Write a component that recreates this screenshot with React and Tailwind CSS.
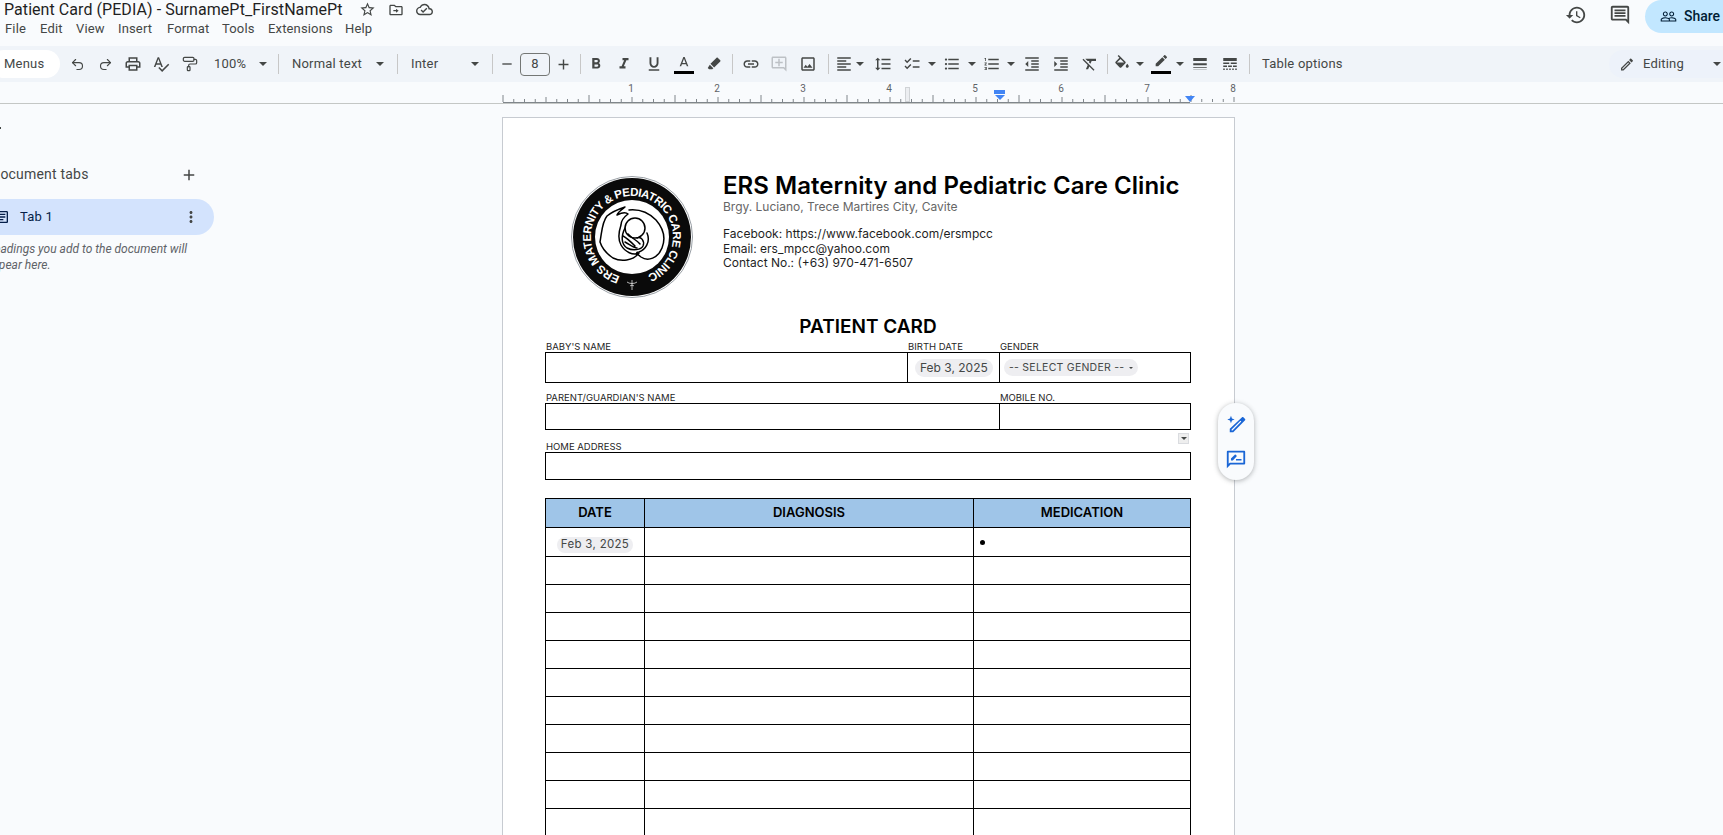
import React from "react";
import { Undo2, Redo2, PaintRoller } from "lucide-react";

const paths = {
  star: "M22 9.24l-7.19-.62L12 2 9.19 8.63 2 9.24l5.46 4.73L5.82 21 12 17.27 18.18 21l-1.63-7.03L22 9.24zM12 15.4l-3.76 2.27 1-4.28-3.32-2.88 4.38-.38L12 6.1l1.71 4.04 4.38.38-3.32 2.88 1 4.28L12 15.4z",
  move: "M20 6h-8l-2-2H4c-1.1 0-2 .9-2 2v12c0 1.1.9 2 2 2h16c1.1 0 2-.9 2-2V8c0-1.1-.9-2-2-2zm0 12H4V6h5.17l2 2H20v10zm-8-2l4-3-4-3v2H8v2h4v2z",
  cloud: "M19.35 10.04C18.67 6.59 15.64 4 12 4 9.11 4 6.6 5.64 5.35 8.04 2.34 8.36 0 10.91 0 14c0 3.31 2.69 6 6 6h13c2.76 0 5-2.24 5-5 0-2.64-2.05-4.78-4.65-4.96zM19 18H6c-2.21 0-4-1.79-4-4 0-2.05 1.53-3.76 3.56-3.97l1.07-.11.5-.95C8.08 7.14 9.94 6 12 6c2.62 0 4.88 1.86 5.39 4.43l.3 1.5 1.53.11c1.56.1 2.78 1.41 2.78 2.96 0 1.65-1.35 3-3 3zm-9-3.82l-2.09-2.09L6.5 13.5 10 17l6.01-6.01-1.41-1.41z",
  print: "M19 8h-1V3H6v5H5c-1.66 0-3 1.34-3 3v6h4v4h12v-4h4v-6c0-1.66-1.34-3-3-3zM8 5h8v3H8V5zm8 12v2H8v-4h8v2zm2-2v-2H6v2H4v-4c0-.55.45-1 1-1h14c.55 0 1 .45 1 1v4h-2z",
  spell: "M12.45 16h2.09L9.43 3H7.57L2.46 16h2.09l1.12-3h5.64l1.14 3zm-6.02-5L8.5 5.48 10.57 11H6.43zm15.16.59l-8.09 8.09L9.83 16l-1.41 1.41 5.09 5.09L23 13l-1.41-1.41z",
  bold: "M15.6 10.79c.97-.67 1.65-1.77 1.65-2.79 0-2.26-1.75-4-4-4H7v14h7.04c2.09 0 3.71-1.7 3.71-3.79 0-1.52-.86-2.82-2.15-3.42zM10 6.5h3c.83 0 1.5.67 1.5 1.5s-.67 1.5-1.5 1.5h-3v-3zm3.5 9H10v-3h3.5c.83 0 1.5.67 1.5 1.5s-.67 1.5-1.5 1.5z",
  italic: "M10 4v3h2.21l-3.42 8H6v3h8v-3h-2.21l3.42-8H18V4z",
  underline: "M12 17c3.31 0 6-2.69 6-6V3h-2.5v8c0 1.93-1.57 3.5-3.5 3.5S8.5 12.93 8.5 11V3H6v8c0 3.31 2.69 6 6 6zm-7 2v2h14v-2H5z",
  letterA: "M11 3L5.5 17h2.25l1.12-3h6.25l1.12 3h2.25L13 3h-2zm-1.38 9L12 5.67 14.38 12H9.62z",
  marker: "M17.6 2.6l3.8 3.8c.5.5.5 1.2 0 1.7l-9.2 9.2-5.5-5.5 9.2-9.2c.5-.5 1.2-.5 1.7 0zM5.7 13l5.3 5.3-1.6 1.6H4.6l-2-2L5.7 13z",
  link: "M3.9 12c0-1.71 1.39-3.1 3.1-3.1h4V7H7c-2.76 0-5 2.24-5 5s2.24 5 5 5h4v-1.9H7c-1.71 0-3.1-1.39-3.1-3.1zM8 13h8v-2H8v2zm9-6h-4v1.9h4c1.71 0 3.1 1.39 3.1 3.1s-1.39 3.1-3.1 3.1h-4V17h4c2.76 0 5-2.24 5-5s-2.24-5-5-5z",
  addComment: "M22 4c0-1.1-.9-2-2-2H4c-1.1 0-2 .9-2 2v12c0 1.1.9 2 2 2h14l4 4V4zm-2 13.17L18.83 16H4V4h16v13.17zM13 5h-2v4H7v2h4v4h2v-4h4V9h-4z",
  image: "M19 5v14H5V5h14m0-2H5c-1.1 0-2 .9-2 2v14c0 1.1.9 2 2 2h14c1.1 0 2-.9 2-2V5c0-1.1-.9-2-2-2zm-4.86 8.86l-3 3.87L9 13.14 6 17h12l-3.86-5.14z",
  align: "M15 15H3v2h12v-2zm0-8H3v2h12V7zM3 13h18v-2H3v2zm0 8h18v-2H3v2zM3 3v2h18V3H3z",
  spacing: "M6 7h2.5L5 3.5 1.5 7H4v10H1.5L5 20.5 8.5 17H6V7zm4-2v2h12V5H10zm0 14h12v-2H10v2zm0-6h12v-2H10v2z",
  checklist: "M22 7h-9v2h9V7zm0 8h-9v2h9v-2zM5.54 11L2 7.46l1.41-1.41 2.12 2.12 4.24-4.24 1.41 1.41L5.54 11zm0 8L2 15.46l1.41-1.41 2.12 2.12 4.24-4.24 1.41 1.41L5.54 19z",
  bullets: "M4 10.5c-.83 0-1.5.67-1.5 1.5s.67 1.5 1.5 1.5 1.5-.67 1.5-1.5-.67-1.5-1.5-1.5zm0-6c-.83 0-1.5.67-1.5 1.5S3.17 7.5 4 7.5 5.5 6.83 5.5 6 4.83 4.5 4 4.5zm0 12c-.83 0-1.5.68-1.5 1.5s.68 1.5 1.5 1.5 1.5-.68 1.5-1.5-.67-1.5-1.5-1.5zM7 19h14v-2H7v2zm0-6h14v-2H7v2zm0-8v2h14V5H7z",
  numbers: "M2 17h2v.5H3v1h1v.5H2v1h3v-4H2v1zm1-9h1V4H2v1h1v3zm-1 3h1.8L2 13.1v.9h3v-1H3.2L5 10.9V10H2v1zm5-6v2h14V5H7zm0 14h14v-2H7v2zm0-6h14v-2H7v2z",
  indentLess: "M11 17h10v-2H11v2zm-8-5l4 4V8l-4 4zm0 9h18v-2H3v2zM3 3v2h18V3H3zm8 6h10V7H11v2zm0 4h10v-2H11v2z",
  indentMore: "M3 21h18v-2H3v2zM3 8v8l4-4-4-4zm8 9h10v-2H11v2zM3 3v2h18V3H3zm8 6h10V7H11v2zm0 4h10v-2H11v2z",
  clear: "M3.27 5L2 6.27l6.97 6.97L6.5 19h3l1.57-3.66L16.73 21 18 19.73 3.55 5.27 3.27 5zM6 5v.18L8.82 8h2.4l-.72 1.68 2.1 2.1L14.21 8H20V5H6z",
  fill: "M16.56 8.94L7.62 0 6.21 1.41l2.38 2.38-5.15 5.15c-.59.59-.59 1.54 0 2.12l5.5 5.5c.29.29.68.44 1.06.44s.77-.15 1.06-.44l5.5-5.5c.59-.58.59-1.53 0-2.12zM5.21 10L10 5.21 14.79 10H5.21zM19 11.5s-2 2.17-2 3.5c0 1.1.9 2 2 2s2-.9 2-2c0-1.33-2-3.5-2-3.5z",
  pen: "M17.75 7L14 3.25l-10 10V17h3.75l10-10zm2.96-2.96c.39-.39.39-1.02 0-1.41L18.37.29c-.39-.39-1.02-.39-1.41 0L15 2.25 18.75 6l1.96-1.96z",
  weight: "M3 17h18v-1H3v1zm0 3h18v-.5H3v.5zm0-6.5h18V11H3v2.5zM3 4v4h18V4H3z",
  dash: "M3 16h5v-2H3v2zm6.5 0h5v-2h-5v2zm6.5 0h5v-2h-5v2zM3 20h2v-2H3v2zm4 0h2v-2H7v2zm4 0h2v-2h-2v2zm4 0h2v-2h-2v2zm4 0h2v-2h-2v2zM3 12h8v-2H3v2zm10 0h8v-2h-8v2zM3 4v4h18V4H3z",
  history: "M13 3c-4.97 0-9 4.03-9 9H1l3.89 3.89.07.14L9 12H6c0-3.87 3.13-7 7-7s7 3.13 7 7-3.13 7-7 7c-1.93 0-3.68-.79-4.94-2.06l-1.42 1.42C8.27 19.99 10.51 21 13 21c4.97 0 9-4.03 9-9s-4.03-9-9-9zm-1 5v5l4.28 2.54.72-1.21-3.5-2.08V8H12z",
  comment: "M21.99 4c0-1.1-.89-2-1.99-2H4c-1.1 0-2 .9-2 2v12c0 1.1.9 2 2 2h14l4 4-.01-18zM20 4v13.17L18.83 16H4V4h16zM6 12h12v2H6zm0-3h12v2H6zm0-3h12v2H6z",
  people: "M16.5 13c-1.2 0-3.07.34-4.5 1-1.43-.67-3.3-1-4.5-1C5.33 13 1 14.08 1 16.25V19h22v-2.75c0-2.17-4.33-3.25-6.5-3.25zm-4 4.5h-10v-1.25c0-.54 2.56-1.75 5-1.75s5 1.21 5 1.75v1.25zm9 0H14v-1.25c0-.46-.2-.86-.52-1.22.88-.3 1.96-.53 3.02-.53 2.44 0 5 1.21 5 1.75v1.25zM7.5 12c1.93 0 3.5-1.57 3.5-3.5S9.43 5 7.5 5 4 6.57 4 8.5 5.57 12 7.5 12zm0-5.5c1.1 0 2 .9 2 2s-.9 2-2 2-2-.9-2-2 .9-2 2-2zm9 5.5c1.93 0 3.5-1.57 3.5-3.5S18.43 5 16.5 5 13 6.57 13 8.5s1.57 3.5 3.5 3.5zm0-5.5c1.1 0 2 .9 2 2s-.9 2-2 2-2-.9-2-2 .9-2 2-2z",
  edit: "M3 17.25V21h3.75L17.81 9.94l-3.75-3.75L3 17.25zM5.92 19H5v-.92l9.06-9.06.92.92L5.92 19zM20.71 7.04c.39-.39.39-1.02 0-1.41l-2.34-2.34c-.39-.39-1.02-.39-1.41 0l-1.83 1.83 3.75 3.75 1.83-1.83z",
  plus: "M19 13h-6v6h-2v-6H5v-2h6V5h2v6h6v2z",
  minus: "M19 13H5v-2h14v2z",
  kebab: "M12 8c1.1 0 2-.9 2-2s-.9-2-2-2-2 .9-2 2 .9 2 2 2zm0 2c-1.1 0-2 .9-2 2s.9 2 2 2 2-.9 2-2-.9-2-2-2zm0 6c-1.1 0-2 .9-2 2s.9 2 2 2 2-.9 2-2-.9-2-2-2z",
  doc: "M19 5v14H5V5h14m0-2H5c-1.1 0-2 .9-2 2v14c0 1.1.9 2 2 2h14c1.1 0 2-.9 2-2V5c0-1.1-.9-2-2-2zM7 7h10v2H7zm0 4h10v2H7zm0 4h7v2H7z",
};

const Icon = ({ d, className = "w-[18px] h-[18px] text-[#444746]" }) => (
  <svg viewBox="0 0 24 24" fill="currentColor" className={className}>
    <path d={d} />
  </svg>
);

// toolbar button box, centered icon
const Btn = ({ d, className = "w-[28px]", iconClass }) => (
  <div className={`${className} flex items-center justify-center shrink-0`}>
    <Icon d={d} className={iconClass} />
  </div>
);

const Caret = ({ className = "w-[12px]" }) => (
  <div className={`${className} flex items-center justify-center shrink-0`}>
    <div className="w-0 h-0 border-l-[4px] border-r-[4px] border-t-[4px] border-l-transparent border-r-transparent border-t-[#444746]" />
  </div>
);

const Divider = ({ className }) => (
  <div className={`${className} w-px h-[20px] bg-[#c7c7c7] shrink-0`} />
);

const Toolbar = () => (
  <div className="h-[36px] bg-[#f0f4f9] flex items-center text-[13px] text-[#444746] font-['Roboto',sans-serif] tracking-[0.2px]">
    <div className="w-[70px] ml-[-10px] h-[28px] bg-white rounded-full flex items-center pl-[14px] shrink-0">Menus</div>
    <div className="w-[28px] ml-[3px] flex justify-center shrink-0"><Undo2 size={15} strokeWidth={1.8} /></div>
    <div className="w-[28px] flex justify-center shrink-0"><Redo2 size={15} strokeWidth={1.8} /></div>
    <Btn d={paths.print} />
    <Btn d={paths.spell} />
    <div className="w-[28px] ml-[1px] flex justify-center shrink-0"><PaintRoller size={16} strokeWidth={1.8} /></div>
    <div className="w-[42px] ml-[10px] shrink-0">100%</div>
    <Caret className="w-[14px]" />
    <Divider className="ml-[8px]" />
    <div className="w-[81px] ml-[13px] shrink-0">Normal text</div>
    <Caret className="w-[14px]" />
    <Divider className="ml-[10px]" />
    <div className="w-[57px] ml-[13px] shrink-0">Inter</div>
    <Caret className="w-[14px]" />
    <Divider className="ml-[10px]" />
    <Btn d={paths.minus} className="w-[27px]" iconClass="w-[16px] h-[16px] text-[#444746]" />
    <div className="w-[30px] h-[23px] border border-[#747775] rounded-[4px] flex items-center justify-center shrink-0">8</div>
    <Btn d={paths.plus} className="w-[26px]" iconClass="w-[17px] h-[17px] text-[#444746]" />
    <Divider className="ml-[4px]" />
    <Btn d={paths.bold} className="w-[28px] ml-[1px]" />
    <Btn d={paths.italic} />
    <Btn d={paths.underline} className="w-[28px] ml-[2px]" />
    <div className="w-[28px] ml-[2px] flex flex-col items-center shrink-0">
      <Icon d={paths.letterA} className="w-[18px] h-[16px] text-[#444746]" />
      <div className="w-[20px] h-[3px] bg-black" />
    </div>
    <Btn d={paths.marker} className="w-[28px] ml-[2px]" iconClass="w-[16px] h-[16px] text-[#444746]" />
    <Divider className="ml-[4px]" />
    <Btn d={paths.link} className="w-[28px] ml-[4px]" />
    <Btn d={paths.addComment} iconClass="w-[18px] h-[18px] text-[#bdc1c6]" />
    <Btn d={paths.image} className="w-[28px] ml-[1px]" />
    <Divider className="ml-[6px]" />
    <Btn d={paths.align} className="w-[24px] ml-[3px]" />
    <Caret className="w-[8px]" />
    <Btn d={paths.spacing} className="w-[28px] ml-[5px]" />
    <Btn d={paths.checklist} className="w-[28px] ml-[1px]" />
    <Caret />
    <Btn d={paths.bullets} />
    <Caret />
    <Btn d={paths.numbers} className="w-[26px] ml-[1px]" />
    <Caret />
    <Btn d={paths.indentLess} className="w-[28px] ml-[1px]" />
    <Btn d={paths.indentMore} className="w-[28px] ml-[1px]" />
    <Btn d={paths.clear} className="w-[28px] ml-[1px]" />
    <Divider className="ml-[3px]" />
    <Btn d={paths.fill} className="w-[25px] ml-[1px]" />
    <Caret />
    <div className="w-[27px] ml-[1px] flex flex-col items-center shrink-0">
      <Icon d={paths.pen} className="w-[18px] h-[16px] text-[#444746]" />
      <div className="w-[20px] h-[3px] bg-black" />
    </div>
    <Caret />
    <Btn d={paths.weight} />
    <Btn d={paths.dash} className="w-[28px] ml-[2px]" />
    <Divider className="ml-[5px]" />
    <div className="ml-[12px] shrink-0">Table options</div>
    <div className="ml-auto w-[114px] h-[28px] bg-[#edf2fa] rounded-l-full flex items-center pl-[10px] shrink-0">
      <Icon d={paths.edit} className="w-[17px] h-[17px] text-[#444746]" />
      <span className="ml-[8px]">Editing</span>
      <Caret className="w-[12px] ml-[27px]" />
    </div>
  </div>
);

const Ruler = () => {
  const ticks = Array.from({ length: 69 }, (_, i) => i);
  return (
    <div className="h-[22px] border-b border-[#c4c7c5] pl-[500px]">
      <svg width="745" height="21" className="block">
        <line x1="3" y1="20.5" x2="690" y2="20.5" stroke="#80868b" />
        {ticks.map((i) => {
          const x = 3 + i * 10.75;
          const h = i % 8 === 0 ? 7 : i % 4 === 0 ? 5 : 3;
          return <line key={i} x1={x} x2={x} y1={20 - h} y2={20} stroke="#80868b" />;
        })}
        {[1, 2, 3, 4, 5, 6, 7, 8].map((n) => (
          <text key={n} x={45 + n * 86} y="10" textAnchor="middle" fontSize="10" fill="#5f6368" fontFamily="Roboto, sans-serif">
            {n}
          </text>
        ))}
        <rect x="405.5" y="5.5" width="4" height="14" fill="#eceef1" stroke="#d0d3d6" />
        <rect x="494" y="8" width="11" height="4" fill="#4285f4" />
        <polygon points="495,13 505,13 500,18" fill="#4285f4" />
        <polygon points="685,14 695,14 690,20" fill="#4285f4" />
      </svg>
    </div>
  );
};

const Sidebar = () => (
  <aside className="w-[516px] ml-[-14px] shrink-0 font-['Roboto',sans-serif]">
    <div className="mt-[23px] ml-[13px] w-[2px] h-[1.5px] bg-[#444746]" />
    <div className="mt-[36px] h-[20px] w-[218px] pl-[5px] pr-[6px] flex items-center justify-between text-[14px] text-[#444746] tracking-[0.2px]">
      <span>Document tabs</span>
      <Icon d={paths.plus} className="w-[18px] h-[18px] text-[#444746]" />
    </div>
    <div className="mt-[14px] h-[36px] w-[228px] bg-[#d3e3fd] rounded-r-full flex items-center pl-[8px] pr-[14px] text-[13px] text-[#041e49]">
      <Icon d={paths.doc} className="w-[16px] h-[16px] text-[#041e49]" />
      <span className="ml-[10px] tracking-[0.2px]">Tab 1</span>
      <Icon d={paths.kebab} className="w-[18px] h-[18px] text-[#444746] ml-auto" />
    </div>
    <p className="mt-[6px] w-[210px] text-[12px] leading-[16px] italic text-[#5f6368]">
      Headings you add to the document will appear here.
    </p>
  </aside>
);

// badge logo of the clinic, drawn by hand
const Logo = () => (
  <svg width="122" height="122" viewBox="0 0 122 122" className="block">
    <circle cx="61" cy="61" r="60.5" fill="#fff" stroke="#9aa0a6" />
    <circle cx="61" cy="61" r="59" fill="#0a0a0a" />
    <circle cx="61" cy="61" r="37" fill="#fff" />
    <path id="logoArc" d="M49 100.2 A41 41 0 1 1 77 98.7" fill="none" />
    <text fontSize="11.5" fontWeight="800" fill="#fff" fontFamily="'Liberation Sans', sans-serif">
      <textPath href="#logoArc" textLength="229" lengthAdjust="spacing">
        ERS MATERNITY &amp; PEDIATRIC CARE CLINIC
      </textPath>
    </text>
    <g fill="none" stroke="#000" strokeWidth="1.5" strokeLinecap="round" strokeLinejoin="round">
      <path d="M29 66 C31 55 31 46 36 40 C42 35 48 33 54 31 C50 34 47 36 46 39 C50 37 55 36 57 38 C53 41 50 44 50 49 C48 55 46 62 50 69 C54 76 62 80 68 77 C62 85 50 86 42 82 C36 78 31 72 29 66 Z" />
      <path d="M58 34 C68 33 78 37 85 44 C92 52 95 62 91 72 C87 82 77 86 70 81 C66 78 64 76 68 76 C74 74 80 66 76 57" />
      <circle cx="64" cy="52" r="10" />
      <path d="M54 52 C50 60 50 68 56 72 C62 75 70 74 72 70 C74 65 70 60 66 62" />
      <path d="M52 60 C56 62 60 66 64 70 M57 58 C60 62 66 64 69 68 M54 66 C58 68 62 72 66 72" />
    </g>
    <g stroke="#fff" strokeWidth="0.7" fill="none">
      <path d="M61 104 V114 M56 106 C58 108 64 108 66 106 M59 110 C60 109 62 109 63 110" />
    </g>
  </svg>
);

const Label = ({ children, className = "" }) => (
  <div className={`h-[13px] text-[9.5px] leading-[15px] pl-px text-[#1f1f1f] ${className}`}>{children}</div>
);

const Chip = ({ children, className = "" }) => (
  <span className={`inline-flex items-center bg-[#eeeef1] rounded-full text-[#444746] ${className}`}>{children}</span>
);

const rows = Array.from({ length: 11 }, (_, i) => i);

const PatientPage = () => (
  <main className="w-[733px] h-[760px] mt-[13px] shrink-0 bg-white border border-[#c7cbd1] border-b-0 pl-[42px] pr-[43px] font-['Inter',sans-serif] text-black">
    <div className="flex pt-[52px] h-[195px]">
      <div className="w-[178px] shrink-0 pl-[26px] pt-[6px]">
        <Logo />
      </div>
      <div>
        <h1 className="pt-[1px] text-[24px] leading-[29px] font-semibold whitespace-nowrap tracking-[0.05px]">ERS Maternity and Pediatric Care Clinic</h1>
        <p className="text-[12px] leading-[14px] text-[#666]">Brgy. Luciano, Trece Martires City, Cavite</p>
        <div className="mt-[13px] text-[12px] leading-[14.5px] text-[#1f1f1f]">
          <p>Facebook: https://www.facebook.com/ersmpcc</p>
          <p>Email: ers_mpcc@yahoo.com</p>
          <p>Contact No.: (+63) 970-471-6507</p>
        </div>
      </div>
    </div>
    <h2 className="pt-[1px] text-[19px] leading-[25px] font-semibold text-center">PATIENT CARD</h2>

    <div className="flex">
      <Label className="w-[362px]">BABY'S NAME</Label>
      <Label className="w-[92px]">BIRTH DATE</Label>
      <Label>GENDER</Label>
    </div>
    <div className="flex h-[31px] border border-black">
      <div className="w-[362px] border-r border-black" />
      <div className="w-[92px] border-r border-black flex items-center pl-[7px]">
        <Chip className="h-[18px] px-[5px] text-[12px]">Feb 3, 2025</Chip>
      </div>
      <div className="flex items-center pl-[4px]">
        <Chip className="h-[17px] px-[5px] text-[10.5px] tracking-[0.25px] gap-[5px]">
          -- SELECT GENDER --
          <span className="w-0 h-0 border-l-[2px] border-r-[2px] border-t-[2px] border-l-transparent border-r-transparent border-t-[#444746]" />
        </Chip>
      </div>
    </div>

    <div className="flex mt-[7px]">
      <Label className="w-[454px]">PARENT/GUARDIAN'S NAME</Label>
      <Label>MOBILE NO.</Label>
    </div>
    <div className="flex h-[27px] border border-black">
      <div className="w-[454px] border-r border-black" />
    </div>

    <Label className="mt-[9px]">HOME ADDRESS</Label>
    <div className="h-[28px] border border-black" />

    <table className="w-full mt-[18px] table-fixed border-collapse">
      <colgroup>
        <col className="w-[99px]" />
        <col className="w-[329px]" />
        <col />
      </colgroup>
      <thead>
        <tr className="h-[29px] bg-[#9fc5e8] text-[13px] font-semibold">
          <th className="border border-black font-semibold">DATE</th>
          <th className="border border-black font-semibold">DIAGNOSIS</th>
          <th className="border border-black font-semibold">MEDICATION</th>
        </tr>
      </thead>
      <tbody>
        <tr className="h-[29px]">
          <td className="border border-black text-center">
            <Chip className="h-[16px] px-[4px] text-[11.5px] tracking-[0.3px]">Feb 3, 2025</Chip>
          </td>
          <td className="border border-black" />
          <td className="border border-black pl-[6px]">
            <div className="w-[5px] h-[5px] rounded-full bg-black" />
          </td>
        </tr>
        {rows.map((r) => (
          <tr key={r} className="h-[28px]">
            <td className="border border-black" />
            <td className="border border-black" />
            <td className="border border-black" />
          </tr>
        ))}
      </tbody>
    </table>
  </main>
);

const App = () => {
  return (
    <div className="relative w-[1723px] h-[835px] overflow-hidden bg-[#f9fbfd] font-['Roboto',sans-serif]">
      {/* Title bar + menu */}
      <header className="h-[46px] flex justify-between">
        <div className="pl-[4px]">
          <div className="flex items-center h-[19px]">
            <span className="text-[16px] leading-[19px] tracking-[0.06px] text-[#1f1f1f] whitespace-nowrap">Patient Card (PEDIA) - SurnamePt_FirstNamePt</span>
            <Icon d={paths.star} className="w-[17px] h-[17px] text-[#444746] ml-[16px]" />
            <Icon d={paths.move} className="w-[16px] h-[16px] text-[#444746] ml-[12px]" />
            <Icon d={paths.cloud} className="w-[17px] h-[17px] text-[#444746] ml-[12px]" />
          </div>
          <nav className="flex mt-[1px] pl-[1px] text-[13px] leading-[17px] text-[#444746] tracking-[0.15px]">
            <span className="w-[35px]">File</span>
            <span className="w-[36px]">Edit</span>
            <span className="w-[42px]">View</span>
            <span className="w-[49px]">Insert</span>
            <span className="w-[55px]">Format</span>
            <span className="w-[46px]">Tools</span>
            <span className="w-[77px]">Extensions</span>
            <span>Help</span>
          </nav>
        </div>
        <div className="flex items-start">
          <Icon d={paths.history} className="w-[22px] h-[22px] mt-[4px] text-[#444746]" />
          <Icon d={paths.comment} className="w-[22px] h-[22px] mt-[4px] ml-[22px] text-[#444746]" />
          <div className="w-[78px] h-[33px] ml-[14px] bg-[#c2e7ff] rounded-l-full flex items-center pl-[15px] text-[14px] text-[#001d35] font-medium">
            <Icon d={paths.people} className="w-[17px] h-[17px] text-[#001d35] shrink-0" />
            <span className="ml-[7px]">Share</span>
          </div>
        </div>
      </header>

      <Toolbar />
      <Ruler />

      <div className="flex">
        <Sidebar />
        <PatientPage />
      </div>

      {/* small dropdown handle at the corner of the table */}
      <div className="absolute left-[1178px] top-[433px] w-[11px] h-[11px] bg-[#eeeeee] border border-[#dadce0] flex items-center justify-center">
        <div className="w-0 h-0 border-l-[3px] border-r-[3px] border-t-[3px] border-l-transparent border-r-transparent border-t-[#444746]" />
      </div>

      {/* floating side actions */}
      <div className="absolute left-[1218px] top-[403px] w-[36px] h-[77px] rounded-full bg-[#f9fbfd] shadow-[0_1px_5px_rgba(60,64,67,0.4)] flex flex-col items-center justify-center gap-[12px]">
        <svg viewBox="0 0 24 24" className="w-[22px] h-[22px] text-[#1a66d6]" fill="currentColor">
          <path d="M20 3.5l1.9 1.9c.4.4.4 1 0 1.4L9 20H5.2v-3.8L18.6 3.5c.4-.4 1-.4 1.4 0zM7.2 17v1h1l9.6-9.7-1-1L7.2 17z" />
          <path d="M6.5 2l1.1 2.9L10.5 6 7.6 7.1 6.5 10 5.4 7.1 2.5 6l2.9-1.1z" />
        </svg>
        <svg viewBox="0 0 24 24" className="w-[22px] h-[22px] text-[#1a66d6]" fill="currentColor">
          <path d="M4 3h17c.6 0 1 .4 1 1v13c0 .6-.4 1-1 1H6l-4 4V4c0-.6.4-1 1-1h1zm0 2v12.2L5.2 16H20V5H4z" />
          <path d="M12 12h6v1.6h-6zM6.5 13.5v-2l4.2-4.2c.3-.3.6-.3.9 0l1 1c.3.3.3.7 0 .9l-4.1 4.3H6.5z" />
        </svg>
      </div>
    </div>
  );
};

export default App;
